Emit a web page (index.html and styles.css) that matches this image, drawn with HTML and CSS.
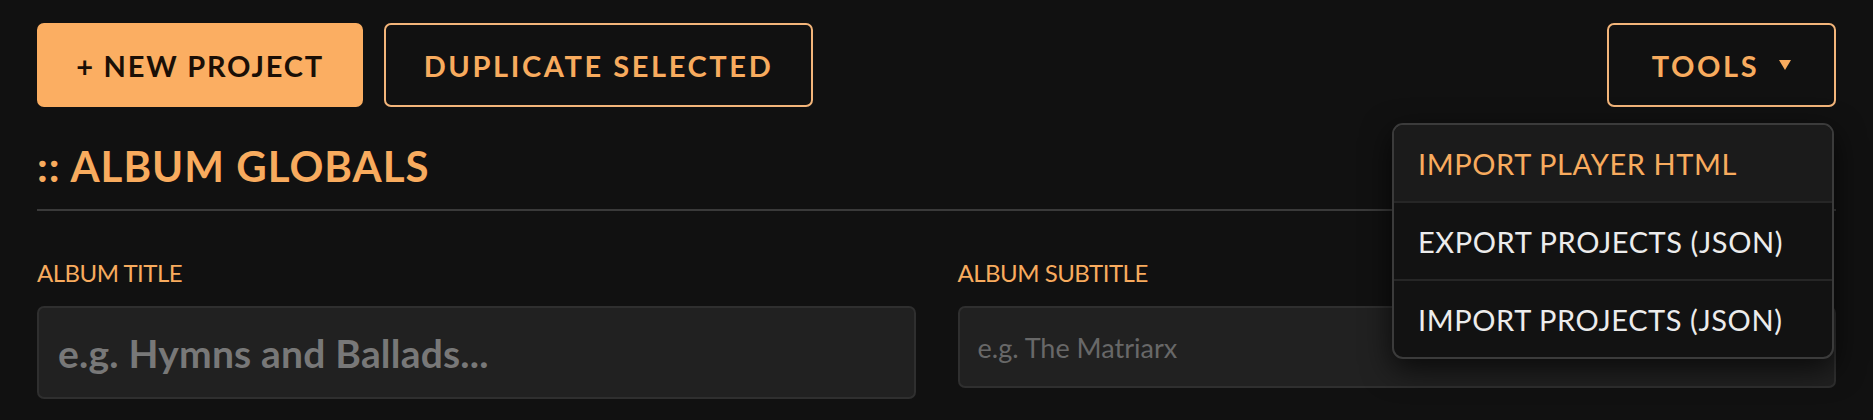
FILE: index.html
```html
<!DOCTYPE html>
<html lang="en">
<head>
<meta charset="utf-8">
<title>Album Editor</title>
<link rel="stylesheet" href="styles.css">
</head>
<body>
<div class="page">
  <div class="toolbar">
    <button class="btn btn-primary">+ NEW PROJECT</button>
    <button class="btn btn-outline btn-dup">DUPLICATE SELECTED</button>
    <div class="tools">
      <button class="btn btn-outline btn-tools">TOOLS <span class="caret"></span></button>
      <div class="menu">
        <div class="menu-item active">IMPORT PLAYER HTML</div>
        <div class="menu-item">EXPORT PROJECTS (JSON)</div>
        <div class="menu-item">IMPORT PROJECTS (JSON)</div>
      </div>
    </div>
  </div>

  <h2 class="section-title">:: ALBUM GLOBALS</h2>

  <div class="fields">
    <div class="field">
      <label class="label">ALBUM TITLE</label>
      <input class="input input-lg" type="text" placeholder="e.g. Hymns and Ballads...">
    </div>
    <div class="field">
      <label class="label">ALBUM SUBTITLE</label>
      <input class="input" type="text" placeholder="e.g. The Matriarx">
    </div>
  </div>
</div>
</body>
</html>
```

FILE: styles.css
```css
html, body {
  margin: 0;
  padding: 0;
  background: #111111;
  height: 100%;
  overflow: hidden;
}

.page {
  padding: 23px 37px 0 37px;
  font-family: Lato, "Noto Sans", sans-serif;
  color: #e6e6e6;
}

.toolbar {
  display: flex;
  align-items: center;
  gap: 21px;
}

.btn {
  height: 84px;
  box-sizing: border-box;
  border-radius: 7px;
  font-family: Lato, "Noto Sans", sans-serif;
  font-weight: 700;
  font-size: 29px;
  letter-spacing: 2.6px;
  padding: 0;
  white-space: nowrap;
  cursor: pointer;
  display: inline-flex;
  align-items: center;
  justify-content: center;
}

.btn-primary {
  background: #fbae62;
  border: 2px solid #fbae62;
  color: #1a0f06;
  width: 326px;
  letter-spacing: 1.8px;
}

.btn-outline {
  background: #111111;
  border: 2px solid #f3b57a;
  color: #f8ab5e;
}

.btn-dup {
  width: 429px;
}

.tools {
  margin-left: auto;
  position: relative;
}

.btn-tools {
  width: 229px;
  gap: 20px;
}

.caret {
  display: inline-block;
  width: 0;
  height: 0;
  border-left: 6px solid transparent;
  border-right: 6px solid transparent;
  border-top: 10px solid #f8ab5e;
}

.menu {
  position: absolute;
  top: 100px;
  right: 2px;
  width: 442px;
  box-sizing: border-box;
  background: #121212;
  border: 2px solid #3b3b3b;
  border-radius: 11px;
  overflow: hidden;
  box-shadow: 0 10px 30px rgba(0, 0, 0, 0.7);
  z-index: 10;
}

.menu-item {
  height: 76px;
  display: flex;
  align-items: center;
  padding: 0 24px;
  font-size: 29px;
  letter-spacing: 0.6px;
  color: #ececec;
  border-top: 2px solid #262626;
}

.menu-item:first-child {
  border-top: none;
}

.menu-item.active {
  background: #1b1b1b;
  color: #f8ab5e;
}

.section-title {
  margin: 34px 0 0 0;
  padding-bottom: 18px;
  border-bottom: 2px solid #3a3a3a;
  font-size: 42px;
  line-height: 1.2;
  font-weight: 700;
  letter-spacing: 1px;
  color: #f8ab5e;
}

.fields {
  display: grid;
  grid-template-columns: 1fr 1fr;
  column-gap: 42px;
  align-items: start;
  margin-top: 48px;
}

.field {
  display: flex;
  flex-direction: column;
}

.label {
  font-size: 24px;
  line-height: 1.2;
  color: #f8ab5e;
  letter-spacing: -0.5px;
  margin-bottom: 18px;
}

.input {
  height: 82px;
  box-sizing: border-box;
  background: #212121;
  border: 2px solid #2f2f2f;
  border-radius: 7px;
  padding: 0 18px;
  font-family: Lato, "Noto Sans", sans-serif;
  font-size: 27px;
  color: #dddddd;
  outline: none;
}

.input::placeholder {
  color: #686868;
}

.input-lg {
  height: 93px;
  font-size: 39px;
  letter-spacing: 0.2px;
  font-weight: 700;
  padding: 0 19px;
}

.input-lg::placeholder {
  color: #787878;
}
```
